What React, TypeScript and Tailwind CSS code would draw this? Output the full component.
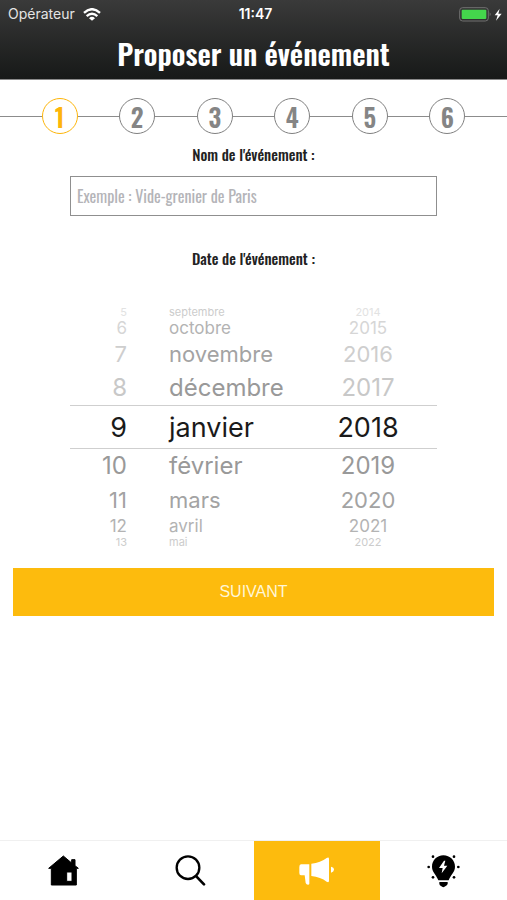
import { useState } from 'react';
import clsx from 'clsx';

const STEPS = [1, 2, 3, 4, 5, 6];

const MONTHS = [
  'janvier', 'février', 'mars', 'avril', 'mai', 'juin',
  'juillet', 'août', 'septembre', 'octobre', 'novembre', 'décembre',
];

const OFFSETS = [-4, -3, -2, -1, 0, 1, 2, 3, 4];

// Row look by distance from the selected value
const ROW_STYLES = [
  'h-[44px] text-[27px] border-y border-[#cfcfcf]',
  'h-[34px] text-[24px]',
  'h-[34px] text-[22px]',
  'h-[18px] text-[17px]',
  'h-[14px] text-[11px]',
];

const DARK_TONES = ['text-[#1a1a1a]', 'text-[#999999]', 'text-[#a3a3a3]', 'text-[#b3b3b3]', 'text-[#cccccc]'];
const LIGHT_TONES = ['text-[#1a1a1a]', 'text-[#c8c8c8]', 'text-[#cecece]', 'text-[#d6d6d6]', 'text-[#e2e2e2]'];

const CONDENSED = "font-['Oswald','Liberation_Sans_Narrow','Open_Sans_Condensed',sans-serif]";

const wrap = (n: number, size: number) => ((n % size) + size) % size;

interface WheelProps {
  label: string;
  className: string;
  fadePast?: boolean;
  format: (offset: number) => string;
  onPick: (offset: number) => void;
}

function Wheel({ label, className, fadePast, format, onPick }: WheelProps) {
  return (
    <div role="group" aria-label={label} className="flex flex-col">
      {OFFSETS.map((offset) => {
        const distance = Math.abs(offset);
        const tones = fadePast && offset < 0 ? LIGHT_TONES : DARK_TONES;
        return (
          <button
            key={offset}
            type="button"
            aria-pressed={offset === 0}
            onClick={() => onPick(offset)}
            className={clsx('flex items-center leading-none', ROW_STYLES[distance], tones[distance], className)}
          >
            {format(offset)}
          </button>
        );
      })}
    </div>
  );
}

function StatusBar() {
  return (
    <div className="grid grid-cols-3 items-center h-7 pl-2 pr-1 text-sm text-[#e4e4e4]">
      <div className="flex items-center gap-2">
        <span>Opérateur</span>
        <svg viewBox="0 0 54 38" className="w-[18px] h-[13px]" fill="none" stroke="white" strokeWidth="7">
          <path d="M3 14 Q27 -8 51 14" />
          <path d="M11 24 Q27 9 43 24" />
          <path d="M18 30 Q27 22 36 30 L27 38 Z" fill="white" stroke="none" />
        </svg>
      </div>
      <span className="text-center font-semibold text-white">11:47</span>
      <div className="flex items-center justify-end">
        <svg viewBox="0 0 132 45" className="w-[44px] h-[15px]">
          <rect x="2" y="2" width="86" height="40" rx="9" fill="none" stroke="#707070" strokeWidth="3" />
          <rect x="8" y="8" width="74" height="28" rx="3" fill="#44d64c" />
          <path d="M92 16 Q98 22 92 28 Z" fill="#707070" />
          <path d="M122 5 L107 25 H116 L111 41 L128 20 H118 Z" fill="white" />
        </svg>
      </div>
    </div>
  );
}

function Stepper({ current }: { current: number }) {
  return (
    <ol className="flex items-center pt-[18px]">
      {STEPS.map((step) => (
        <li key={step} className="contents">
          <span className="flex-1 h-px bg-[#8c8c8c]" />
          <span
            className={clsx(
              'flex items-center justify-center size-9 rounded-full border text-[25px] leading-none font-semibold',
              CONDENSED,
              step === current ? 'border-[#fdb50a] text-[#fdb50a]' : 'border-[#808080] text-[#858585]',
            )}
          >
            {step}
          </span>
        </li>
      ))}
      <li aria-hidden="true" className="flex-1 h-px bg-[#8c8c8c]" />
    </ol>
  );
}

function HomeIcon() {
  return (
    <svg
      viewBox="0 0 93 93"
      className="size-[31px]"
      fill="currentColor"
      stroke="currentColor"
      strokeWidth="3"
      strokeLinejoin="round"
    >
      <path
        fillRule="evenodd"
        d="M46 3 L71 24 V14 H81 V32 L91 40 H85 V90 H10 V40 H2 Z M56 51 V79 H72 V51 Z"
      />
    </svg>
  );
}

function SearchIcon() {
  return (
    <svg viewBox="0 0 93 93" className="size-[31px]" fill="none" stroke="currentColor" strokeWidth="7">
      <circle cx="39" cy="38" r="34" />
      <path d="M64 64 L87 88" strokeWidth="8" strokeLinecap="round" />
    </svg>
  );
}

function MegaphoneIcon() {
  return (
    <svg viewBox="0 0 105 84" className="w-[35px] h-[28px]" fill="currentColor">
      <path d="M6 22 H31 V80 Q31 83 27 83 Q22 83 20 78 L17 55 H6 Q1 55 1 48 V30 Q1 22 6 22 Z" />
      <path d="M37 20 Q65 17 83 3 Q90 -1 90 6 V71 Q90 78 83 74 Q65 60 37 57 Z" />
      <path d="M96 29 Q105 31 105 38 Q105 44 96 47 Z" />
    </svg>
  );
}

function IdeaIcon() {
  return (
    <svg viewBox="0 0 99 102" className="w-[33px] h-[34px]" fill="currentColor">
      <path
        fillRule="evenodd"
        d="M49 4 C69 4 84 19 84 38 C84 55 71 62 65 79 H34 C28 62 15 55 15 38 C15 19 30 4 49 4 Z M51 20 L36 42 H47 L44 58 L61 35 H51 L55 20 Z"
      />
      <path d="M37 84 H62 V90 Q60 94 56 96 Q49 103 42 96 Q38 94 37 90 Z" />
      <circle cx="18" cy="8" r="4" />
      <circle cx="81" cy="8" r="4" />
      <circle cx="5" cy="39" r="4" />
      <circle cx="94" cy="39" r="4" />
      <circle cx="18" cy="70" r="4" />
      <circle cx="81" cy="70" r="4" />
    </svg>
  );
}

const TABS = [
  { id: 'accueil', label: 'Accueil', Icon: HomeIcon },
  { id: 'recherche', label: 'Recherche', Icon: SearchIcon },
  { id: 'proposer', label: 'Proposer', Icon: MegaphoneIcon },
  { id: 'idees', label: 'Idées', Icon: IdeaIcon },
];

export default function App() {
  const [name, setName] = useState('');
  const [day, setDay] = useState(9);
  const [month, setMonth] = useState(0);
  const [year, setYear] = useState(2018);

  return (
    <div className="flex flex-col min-h-screen bg-white font-['Inter','Liberation_Sans',sans-serif]">
      <header className="bg-linear-to-b from-[#3a3a3a] to-[#171918] border-b border-[#8a8a8a]">
        <StatusBar />
        <h1 className={clsx('h-[51px] text-center text-[29px] leading-[50px] font-semibold text-white', CONDENSED)}>
          Proposer un événement
        </h1>
      </header>

      <main className="flex-1">
        <Stepper current={1} />

        <form onSubmit={(e) => e.preventDefault()}>
          <div className="px-[70px]">
            <label
              htmlFor="event-name"
              className={clsx('block pt-2 text-center text-[15px] leading-6 font-medium text-[#222222]', CONDENSED)}
            >
              Nom de l'événement :
            </label>
            <input
              id="event-name"
              type="text"
              value={name}
              onChange={(e) => setName(e.target.value)}
              placeholder="Exemple : Vide-grenier de Paris"
              className={clsx(
                'block w-full h-10 mt-2.5 px-1.5 border border-[#8f8f8f] text-base placeholder:text-[#b4b4b8]',
                CONDENSED,
              )}
            />

            <fieldset className="mt-[30px]">
              <legend
                className={clsx('w-full text-center text-[15px] leading-6 font-medium text-[#222222]', CONDENSED)}
              >
                Date de l'événement :
              </legend>
              <div className="grid grid-cols-[99px_1fr_138px] mt-[35px]">
                <Wheel
                  label="Jour"
                  className="justify-end pr-[42px]"
                  fadePast
                  format={(o) => String(wrap(day - 1 + o, 31) + 1)}
                  onPick={(o) => setDay(wrap(day - 1 + o, 31) + 1)}
                />
                <Wheel
                  label="Mois"
                  className="justify-start"
                  format={(o) => MONTHS[wrap(month + o, 12)]}
                  onPick={(o) => setMonth(wrap(month + o, 12))}
                />
                <Wheel
                  label="Année"
                  className="justify-center"
                  fadePast
                  format={(o) => String(year + o)}
                  onPick={(o) => setYear(year + o)}
                />
              </div>
            </fieldset>
          </div>

          <div className="px-[13px] pt-[19px]">
            <button
              type="submit"
              className="w-full h-12 bg-[#fdbb0d] font-['Liberation_Sans',sans-serif] text-base text-[#fff6d8]"
            >
              SUIVANT
            </button>
          </div>
        </form>
      </main>

      <nav className="grid grid-cols-4 h-[60px] border-t border-[#f0f0f0]">
        {TABS.map(({ id, label, Icon }) => (
          <a
            key={id}
            href={`#${id}`}
            aria-label={label}
            className={clsx(
              'flex items-center justify-center',
              id === 'proposer' ? 'bg-[#fdbb0d] text-white' : 'text-black',
            )}
          >
            <Icon />
          </a>
        ))}
      </nav>
    </div>
  );
}
